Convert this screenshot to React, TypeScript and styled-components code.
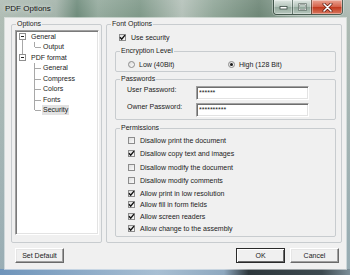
import React from 'react'
import styled, { createGlobalStyle, css } from 'styled-components'

const GlobalStyle = createGlobalStyle`
  body {
    margin: 0;
    background: #fff;
  }
`

type TreeItem = {
  label: string
  cells: CellKind[]
  expander?: boolean
  selected?: boolean
}

type CellKind = 'boxDown' | 'boxUp' | 'vline' | 'tee' | 'corner' | 'none'

const treeItems: TreeItem[] = [
  { label: 'General', cells: ['boxDown'], expander: true },
  { label: 'Output', cells: ['vline', 'corner'] },
  { label: 'PDF format', cells: ['boxUp'], expander: true },
  { label: 'General', cells: ['none', 'tee'] },
  { label: 'Compress', cells: ['none', 'tee'] },
  { label: 'Colors', cells: ['none', 'tee'] },
  { label: 'Fonts', cells: ['none', 'tee'] },
  { label: 'Security', cells: ['none', 'corner'], selected: true },
]

const disallowItems = [
  { label: 'Disallow print the document', checked: false },
  { label: 'Disallow copy text and images', checked: true },
  { label: 'Disallow modify the document', checked: false },
  { label: 'Disallow modify comments', checked: false },
]

const allowItems = [
  { label: 'Allow print in low resolution', checked: true },
  { label: 'Allow fill in form fields', checked: true },
  { label: 'Allow screen readers', checked: true },
  { label: 'Allow change to the assembly', checked: true },
]

const CheckMark = () => (
  <svg width="7" height="7" viewBox="0 0 7 7">
    <path d="M1 3.3 L2.7 5.2 L6 1.1" fill="none" stroke="#111" strokeWidth="1.4" />
  </svg>
)

const MinIcon = () => (
  <svg width="9" height="6" viewBox="0 0 9 6">
    <rect x="1" y="2.5" width="7" height="2.5" fill="#fff" stroke="#3a4a42" strokeWidth="0.8" />
  </svg>
)

const MaxIcon = () => (
  <svg width="9" height="8" viewBox="0 0 9 8">
    <rect x="1.2" y="1.2" width="6.6" height="5.6" fill="none" stroke="#3a4a42" strokeWidth="1.6" />
    <rect x="1.2" y="1.2" width="6.6" height="5.6" fill="none" stroke="#fff" strokeWidth="0.7" />
  </svg>
)

const CloseIcon = () => (
  <svg width="11" height="9" viewBox="0 0 11 9">
    <path d="M2 1 L9 8 M9 1 L2 8" stroke="#5a1a10" strokeWidth="3" strokeLinecap="round" />
    <path d="M2 1 L9 8 M9 1 L2 8" stroke="#fff" strokeWidth="1.6" strokeLinecap="round" />
  </svg>
)

export default function App() {
  return (
    <>
      <GlobalStyle />
      <Window>
        <TitleBar>
          <Title>PDF Options</Title>
          <CaptionGroup>
            <CaptionButton>
              <MinIcon />
            </CaptionButton>
            <CaptionButton>
              <MaxIcon />
            </CaptionButton>
            <CaptionButton $close>
              <CloseIcon />
            </CaptionButton>
          </CaptionGroup>
        </TitleBar>

        <Client>
          <Panels>
            <OptionsBox>
              <Legend>Options</Legend>
              <OptionsBody>
                <Tree>
                  {treeItems.map((item, i) => (
                    <TreeRow key={i}>
                      {item.cells.map((kind, j) => (
                        <Cell
                          key={j}
                          $up={kind === 'boxUp' || kind === 'vline' || kind === 'tee' || kind === 'corner'}
                          $down={kind === 'boxDown' || kind === 'vline' || kind === 'tee'}
                          $right={kind === 'tee' || kind === 'corner'}
                          $box={kind === 'boxUp' || kind === 'boxDown'}
                        >
                          {(kind === 'boxUp' || kind === 'boxDown') && <Expander />}
                        </Cell>
                      ))}
                      <TreeLabel $selected={item.selected}>{item.label}</TreeLabel>
                    </TreeRow>
                  ))}
                </Tree>
              </OptionsBody>
            </OptionsBox>

            <FontBox>
              <Legend>Font Options</Legend>
              <FontBody>
                <CheckRow $h={9} $indent={4}>
                  <CheckBox>
                    <CheckMark />
                  </CheckBox>
                  Use security
                </CheckRow>

                <SubGroup $gap={5}>
                  <Legend>Encryption Level</Legend>
                  <RadioGrid>
                    <RadioRow>
                      <Radio />
                      Low (40Bit)
                    </RadioRow>
                    <RadioRow>
                      <Radio $checked />
                      High (128 Bit)
                    </RadioRow>
                  </RadioGrid>
                </SubGroup>

                <SubGroup $gap={3}>
                  <Legend>Passwords</Legend>
                  <PasswordGrid>
                    <FieldLabel>User Password:</FieldLabel>
                    <PasswordInput type="text" readOnly value="******" />
                    <FieldLabel>Owner Password:</FieldLabel>
                    <PasswordInput type="text" readOnly value="**********" />
                  </PasswordGrid>
                </SubGroup>

                <PermissionsBox $gap={4}>
                  <Legend>Permissions</Legend>
                  <PermissionsBody>
                    {disallowItems.map((item) => (
                      <CheckRow key={item.label} $h={13.3}>
                        <CheckBox>{item.checked && <CheckMark />}</CheckBox>
                        {item.label}
                      </CheckRow>
                    ))}
                    {allowItems.map((item) => (
                      <CheckRow key={item.label} $h={11.7}>
                        <CheckBox>{item.checked && <CheckMark />}</CheckBox>
                        {item.label}
                      </CheckRow>
                    ))}
                  </PermissionsBody>
                </PermissionsBox>
              </FontBody>
            </FontBox>
          </Panels>

          <ButtonRow>
            <Button>Set Default</Button>
            <Spacer />
            <Button $default>OK</Button>
            <Button>Cancel</Button>
          </ButtonRow>
        </Client>
      </Window>
    </>
  )
}

const Window = styled.div`
  width: 350px;
  height: 275px;
  display: flex;
  flex-direction: column;
  overflow: hidden;
  font-family: "Liberation Sans", Arial, sans-serif;
  font-size: 7px;
  color: #1b1b1b;
  background:
    linear-gradient(90deg, #6f94ba 0%, #a8bfd3 45%, #8ea8bf 64%, #2d373c 71%, #3d4a50 92%, #7d8f99 100%) bottom / 100% 6px no-repeat,
    linear-gradient(180deg, rgba(255, 255, 255, 0.1) 0%, rgba(255, 255, 255, 0) 18px, rgba(110, 145, 180, 0.35) 100%),
    linear-gradient(90deg, #b0bdb5 0%, #a3b3aa 16%, #6e8b7b 22%, #94aa9d 28%, #7e9888 40%, #b4c1b9 52%, #90a698 61%, #6d8676 74%, #97aa9f 85%, #adbab3 100%);
`

const TitleBar = styled.div`
  flex: none;
  height: 18px;
  display: flex;
  align-items: flex-start;
`

const Title = styled.div`
  padding-left: 5px;
  line-height: 18px;
  font-size: 8px;
  color: #141414;
  text-shadow: 0 0 4px rgba(255, 255, 255, 0.9);
`

const CaptionGroup = styled.div`
  margin-left: auto;
  margin-right: 7px;
  height: 14px;
  display: flex;
  border: 1px solid rgba(35, 55, 45, 0.7);
  border-top: none;
  border-radius: 0 0 4px 4px;
  overflow: hidden;
  box-shadow: 0 0 0 1px rgba(255, 255, 255, 0.35);
`

const CaptionButton = styled.div<{ $close?: boolean }>`
  width: ${(p) => (p.$close ? 30 : 18)}px;
  display: flex;
  align-items: center;
  justify-content: center;
  background: linear-gradient(180deg, #dfe7e2 0%, #b3c3ba 48%, #94a99d 52%, #b7c7be 100%);
  box-shadow: inset 0 0 0 1px rgba(255, 255, 255, 0.35);

  & + & {
    border-left: 1px solid rgba(35, 55, 45, 0.55);
  }

  ${(p) =>
    p.$close &&
    css`
      background: linear-gradient(180deg, #eaa594 0%, #d5624a 48%, #c1391d 52%, #d87860 100%);
    `}
`

const Client = styled.div`
  flex: 1;
  min-height: 0;
  margin: 0 4px 6px 5px;
  padding: 2px 4px 0 6px;
  display: flex;
  flex-direction: column;
  background: #f0f0f0;
  box-shadow: 0 0 0 1px rgba(255, 255, 255, 0.5);
`

const Panels = styled.div`
  flex: 1;
  min-height: 0;
  display: flex;
  gap: 4px;
`

const GroupBox = styled.fieldset`
  margin: 0;
  padding: 0;
  min-width: 0;
  border: 1px solid #c8cccf;
  border-radius: 2px;
  display: flex;
  flex-direction: column;
`

const Legend = styled.legend`
  margin-left: 4px;
  padding: 0 1px;
  font-size: 7px;
  line-height: 8px;
`

const OptionsBox = styled(GroupBox)`
  flex: none;
  width: 89px;
`

const OptionsBody = styled.div`
  flex: 1;
  display: flex;
  flex-direction: column;
  padding: 1.5px 2px 7px 3px;
`

const Tree = styled.div`
  flex: 1;
  padding: 1px;
  background: #fff;
  border: 1px solid;
  border-color: #a0a0a0 #fff #fff #a0a0a0;
  box-shadow: inset 1px 1px 0 #7a7a7a, inset -1px -1px 0 #e3e3e3;
`

const TreeRow = styled.div`
  height: 10.5px;
  display: flex;
  align-items: center;
`

const Cell = styled.span<{ $up?: boolean; $down?: boolean; $right?: boolean; $box?: boolean }>`
  position: relative;
  flex: none;
  width: 12px;
  align-self: stretch;

  &::before {
    content: '';
    display: ${(p) => (p.$up || p.$down ? 'block' : 'none')};
    position: absolute;
    left: 5px;
    width: 1px;
    top: ${(p) => (p.$up ? '0' : '50%')};
    bottom: ${(p) => (p.$down ? '0' : '50%')};
    background: #a8a8a8;
  }

  &::after {
    content: '';
    display: ${(p) => (p.$right ? 'block' : 'none')};
    position: absolute;
    left: 6px;
    right: 0;
    top: 50%;
    height: 1px;
    background: #a8a8a8;
  }
`

const Expander = styled.span`
  position: absolute;
  left: 2px;
  top: 50%;
  margin-top: -3.5px;
  width: 7px;
  height: 7px;
  box-sizing: border-box;
  border: 1px solid #8f8f8f;
  background: #fff;
  z-index: 1;

  &::after {
    content: '';
    position: absolute;
    left: 1px;
    right: 1px;
    top: 2px;
    height: 1px;
    background: #222;
  }
`

const TreeLabel = styled.span<{ $selected?: boolean }>`
  margin-left: 1px;
  padding: 1px 1px;
  line-height: 8px;
  white-space: nowrap;
  background: ${(p) => (p.$selected ? '#e2e2e2' : 'transparent')};
`

const FontBox = styled(GroupBox)`
  flex: 1;
`

const FontBody = styled.div`
  flex: 1;
  display: flex;
  flex-direction: column;
  padding: 5px 5px 5px 8px;
`

const SubGroup = styled(GroupBox)<{ $gap: number }>`
  flex: none;
  margin-top: ${(p) => p.$gap}px;
`

const PermissionsBox = styled(SubGroup)`
  flex: 1;
`

const CheckRow = styled.div<{ $h: number; $indent?: number }>`
  height: ${(p) => p.$h}px;
  display: flex;
  align-items: center;
  gap: 5px;
  margin-left: ${(p) => p.$indent ?? 0}px;
  white-space: nowrap;
`

const CheckBox = styled.span`
  flex: none;
  width: 7px;
  height: 7px;
  box-sizing: border-box;
  border: 1px solid #8c8c8c;
  background: linear-gradient(135deg, #dedede, #fafafa);
  display: flex;
  align-items: center;
  justify-content: center;

  svg {
    flex: none;
  }
`

const RadioGrid = styled.div`
  display: grid;
  grid-template-columns: 100px 100px;
  padding: 4.5px 0 2.5px 12px;
`

const RadioRow = styled.div`
  height: 9px;
  display: flex;
  align-items: center;
  gap: 4px;
  white-space: nowrap;
`

const Radio = styled.span<{ $checked?: boolean }>`
  flex: none;
  position: relative;
  width: 7px;
  height: 7px;
  box-sizing: border-box;
  border-radius: 50%;
  border: 1px solid #8c8c8c;
  background: linear-gradient(135deg, #dcdcdc, #fafafa);

  &::after {
    content: '';
    display: ${(p) => (p.$checked ? 'block' : 'none')};
    position: absolute;
    left: 1px;
    top: 1px;
    width: 3px;
    height: 3px;
    border-radius: 50%;
    background: #1a1a1a;
  }
`

const PasswordGrid = styled.div`
  display: grid;
  grid-template-columns: 69px 113px;
  row-gap: 3px;
  padding: 3px 0 2px 11px;
`

const FieldLabel = styled.span`
  line-height: 8px;
  white-space: nowrap;
`

const PasswordInput = styled.input`
  box-sizing: border-box;
  width: 113px;
  height: 14px;
  margin: 0;
  padding: 0 2px 2px;
  font-family: inherit;
  font-size: 7px;
  color: #1b1b1b;
  background: #fff;
  outline: none;
  border: 1px solid;
  border-color: #a0a0a0 #fff #fff #a0a0a0;
  box-shadow: inset 1px 1px 0 #6e6e6e, inset -1px -1px 0 #e3e3e3;
`

const PermissionsBody = styled.div`
  display: flex;
  flex-direction: column;
  padding: 2px 0 2px 12px;
`

const ButtonRow = styled.div`
  flex: none;
  height: 26px;
  display: flex;
  align-items: flex-start;
  gap: 5px;
  padding: 5px 3px 0 4px;
  box-sizing: border-box;
`

const Spacer = styled.div`
  flex: 1;
`

const Button = styled.button<{ $default?: boolean }>`
  width: 49px;
  height: 15px;
  padding: 0;
  font-family: inherit;
  font-size: 7px;
  color: #1b1b1b;
  background: #f0f0f0;
  border: 1px solid;
  border-color: #fff #6a6a6a #6a6a6a #fff;
  box-shadow: inset -1px -1px 0 #a0a0a0, inset 1px 1px 0 #e6e6e6;

  ${(p) =>
    p.$default &&
    css`
      border-color: #2a2a2a;
      box-shadow: inset 1px 1px 0 #fff, inset -1px -1px 0 #6a6a6a;
    `}
`
